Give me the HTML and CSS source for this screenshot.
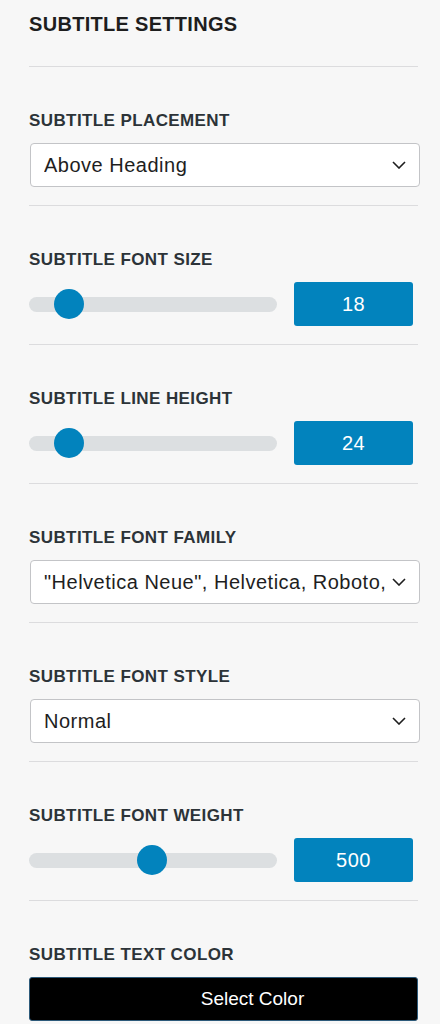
FILE: index.html
```html
<!DOCTYPE html>
<html>
<head>
<meta charset="utf-8">
<link rel="stylesheet" href="styles.css">
</head>
<body>
<div class="panel">
  <h2 class="title">SUBTITLE SETTINGS</h2>

  <div class="section">
    <div class="label">SUBTITLE PLACEMENT</div>
    <div class="select"><span class="select-text">Above Heading</span>
      <svg class="chev" viewBox="0 0 14 8" width="14" height="8"><path d="M1 1l6 6 6-6" fill="none" stroke="#1e1e1e" stroke-width="1.6"/></svg>
    </div>
  </div>

  <div class="section">
    <div class="label">SUBTITLE FONT SIZE</div>
    <div class="range-row">
      <div class="track"><div class="thumb" style="left: 40px"></div></div>
      <div class="num">18</div>
    </div>
  </div>

  <div class="section">
    <div class="label">SUBTITLE LINE HEIGHT</div>
    <div class="range-row">
      <div class="track"><div class="thumb" style="left: 40px"></div></div>
      <div class="num">24</div>
    </div>
  </div>

  <div class="section">
    <div class="label">SUBTITLE FONT FAMILY</div>
    <div class="select"><span class="select-text">"Helvetica Neue", Helvetica, Roboto, Arial, sans-serif</span>
      <svg class="chev" viewBox="0 0 14 8" width="14" height="8"><path d="M1 1l6 6 6-6" fill="none" stroke="#1e1e1e" stroke-width="1.6"/></svg>
    </div>
  </div>

  <div class="section">
    <div class="label">SUBTITLE FONT STYLE</div>
    <div class="select"><span class="select-text">Normal</span>
      <svg class="chev" viewBox="0 0 14 8" width="14" height="8"><path d="M1 1l6 6 6-6" fill="none" stroke="#1e1e1e" stroke-width="1.6"/></svg>
    </div>
  </div>

  <div class="section">
    <div class="label">SUBTITLE FONT WEIGHT</div>
    <div class="range-row">
      <div class="track"><div class="thumb" style="left: 123px"></div></div>
      <div class="num">500</div>
    </div>
  </div>

  <div class="section">
    <div class="label">SUBTITLE TEXT COLOR</div>
    <div class="color-btn">Select Color</div>
  </div>
</div>
</body>
</html>
```

FILE: styles.css
```css
html, body {
  margin: 0;
  padding: 0;
  background: #f7f7f7;
}
body {
  font-family: "Liberation Sans", Arial, sans-serif;
  color: #1e1e1e;
}
.panel {
  padding: 12px 22px 0 29px;
}
.title {
  margin: 0;
  font-size: 20px;
  line-height: 24px;
  font-weight: 700;
  color: #1e1e1e;
  letter-spacing: 0.3px;
  padding-bottom: 30px;
  border-bottom: 1px solid #dcdcde;
}
.section {
  padding-top: 44px;
  padding-bottom: 18px;
  border-bottom: 1px solid #dcdcde;
}
.section:last-child {
  border-bottom: none;
}
.label {
  font-size: 17px;
  line-height: 20px;
  font-weight: 700;
  color: #2c3338;
  letter-spacing: 0.4px;
  margin-bottom: 12px;
}
.select {
  height: 42px;
  margin-left: 1px;
  margin-right: -2px;
  background: #fff;
  border: 1px solid #c3c4c7;
  border-radius: 4px;
  display: flex;
  align-items: center;
  padding: 0 13px 0 13px;
}
.select-text {
  flex: 1;
  font-size: 20px;
  letter-spacing: 0.5px;
  color: #1e1e1e;
  white-space: nowrap;
  overflow: hidden;
  margin-right: 4px;
}
.chev {
  flex: none;
}
.range-row {
  height: 44px;
  display: flex;
  align-items: center;
  gap: 17px;
}
.track {
  position: relative;
  width: 248px;
  height: 15px;
  border-radius: 8px;
  background: #dcdfe1;
}
.thumb {
  position: absolute;
  top: 50%;
  width: 30px;
  height: 30px;
  margin: -15px 0 0 -15px;
  border-radius: 50%;
  background: #0283bd;
}
.num {
  width: 119px;
  height: 44px;
  border-radius: 3px;
  background: #0283bd;
  color: #fff;
  font-size: 20px;
  letter-spacing: 0.5px;
  display: flex;
  align-items: center;
  justify-content: center;
}
.color-btn {
  height: 42px;
  background: #000;
  border: 1px solid #2d5a7a;
  border-radius: 3px;
  color: #fff;
  font-size: 19px;
  display: flex;
  align-items: center;
  justify-content: center;
  padding-left: 58px;
}
```
